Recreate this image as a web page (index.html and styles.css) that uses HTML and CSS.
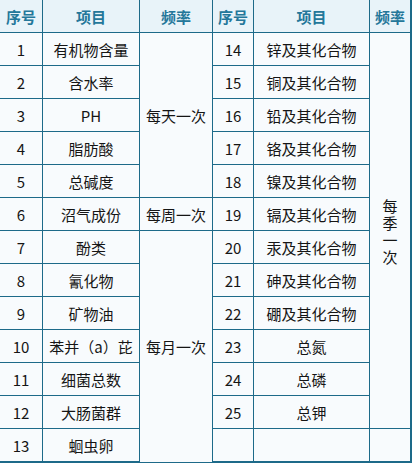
FILE: index.html
```html
<!DOCTYPE html>
<html lang="zh">
<head>
<meta charset="utf-8">
<link rel="stylesheet" href="styles.css">
</head>
<body>
<table class="grid">
  <colgroup>
    <col class="c-num"><col class="c-item"><col class="c-freq">
    <col class="c-num2"><col class="c-item2"><col class="c-freq2">
  </colgroup>
  <thead>
    <tr><th>序号</th><th>项目</th><th>频率</th><th>序号</th><th>项目</th><th class="last">频率</th></tr>
  </thead>
  <tbody>
    <tr><td>1</td><td>有机物含量</td><td rowspan="5">每天一次</td><td>14</td><td>锌及其化合物</td><td rowspan="12" class="last vert"><span class="vtext">每季一次</span></td></tr>
    <tr><td>2</td><td>含水率</td><td>15</td><td>铜及其化合物</td></tr>
    <tr><td>3</td><td>PH</td><td>16</td><td>铅及其化合物</td></tr>
    <tr><td>4</td><td>脂肪酸</td><td>17</td><td>铬及其化合物</td></tr>
    <tr><td>5</td><td>总碱度</td><td>18</td><td>镍及其化合物</td></tr>
    <tr><td>6</td><td>沼气成份</td><td>每周一次</td><td>19</td><td>镉及其化合物</td></tr>
    <tr><td>7</td><td>酚类</td><td rowspan="7">每月一次</td><td>20</td><td>汞及其化合物</td></tr>
    <tr><td>8</td><td>氰化物</td><td>21</td><td>砷及其化合物</td></tr>
    <tr><td>9</td><td>矿物油</td><td>22</td><td>硼及其化合物</td></tr>
    <tr><td>10</td><td>苯并（a）芘</td><td>23</td><td>总氮</td></tr>
    <tr><td>11</td><td>细菌总数</td><td>24</td><td>总磷</td></tr>
    <tr><td>12</td><td>大肠菌群</td><td>25</td><td>总钾</td></tr>
    <tr class="end"><td>13</td><td>蛔虫卵</td><td></td><td></td><td class="last"></td></tr>
  </tbody>
</table>
</body>
</html>
```
FILE: styles.css
```css
html, body {
  margin: 0;
  padding: 0;
  background: #ffffff;
}

.grid {
  border-collapse: separate;
  border-spacing: 0;
  table-layout: fixed;
  width: 412px;
  font-family: "Noto Sans CJK SC", "Noto Sans", sans-serif;
  font-size: 15px;
  color: #151515;
  background: #f8fbfd;
}

.c-num { width: 43px; }
.c-item { width: 97px; }
.c-freq { width: 73px; }
.c-num2 { width: 41px; }
.c-item2 { width: 116px; }
.c-freq2 { width: 42px; }

.grid th,
.grid td {
  box-sizing: border-box;
  height: 33px;
  padding: 0;
  text-align: center;
  vertical-align: middle;
  border-right: 1px solid #1d6a89;
  border-bottom: 1px solid #1d6a89;
  line-height: 1;
  white-space: nowrap;
}

.grid th {
  background: #e8f3f9;
  color: #24779a;
  font-weight: 700;
  font-size: 15px;
}

.grid .last {
  border-right: 2px solid #1d6a89;
}

.grid .end td {
  height: 34px;
  border-bottom: 2px solid #1d6a89;
}

.vtext {
  display: inline-block;
  width: 1em;
  white-space: normal;
  line-height: 17px;
  word-break: break-all;
}
```
